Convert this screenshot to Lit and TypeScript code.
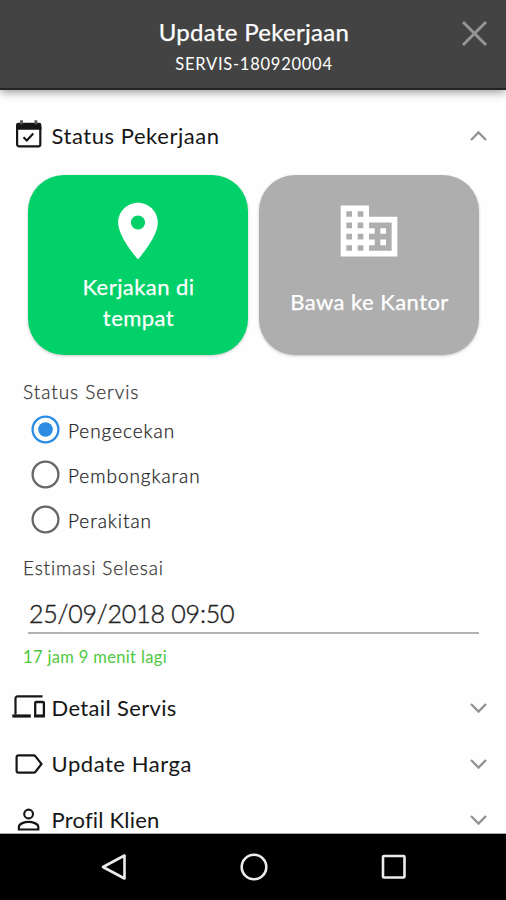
import { LitElement, html, css, svg } from "lit";
import { customElement, property, state } from "lit/decorators.js";
import { classMap } from "lit/directives/class-map.js";

const icons: Record<string, unknown> = {
  calendar: svg`<path d="M6.100 9v17.600a1.700 1.700 0 0 0 1.700 1.700h19.800a1.700 1.700 0 0 0 1.700-1.700V9" fill="none" stroke="#161616" stroke-width="2.200"/>
    <path d="M5 11.800V7a2.200 2.200 0 0 1 2.200-2.200h21A2.200 2.200 0 0 1 30.400 7v4.800z" fill="#161616"/>
    <path d="M10.500 2.200v4M24.900 2.200v4" stroke="#555" stroke-width="2.800" fill="none"/>
    <path d="M12.500 19.300l3.300 3.200 6.500-7" fill="none" stroke="#161616" stroke-width="2.100"/>`,
  devices: svg`<path d="M4.500 24.500V8.500a2.200 2.200 0 0 1 2.200-2.200H31.500" fill="none" stroke="#161616" stroke-width="2.200"/>
    <path d="M1.300 26H19.800" stroke="#161616" stroke-width="3.200" fill="none"/>
    <rect x="24.200" y="12" width="8.700" height="13.700" rx="1" fill="none" stroke="#161616" stroke-width="2.300"/>
    <path d="M23 26.200H34" stroke="#161616" stroke-width="2.600"/>`,
  label: svg`<path d="M7.500 9.300H22.500a2.500 2.500 0 0 1 2 1L30.500 18l-6 7.700a2.500 2.500 0 0 1-2 1H7.500A1.900 1.900 0 0 1 5.600 24.800V11.200A1.900 1.900 0 0 1 7.500 9.300z" fill="none" stroke="#161616" stroke-width="2.200"/>`,
  person: svg`<circle cx="17.600" cy="12" r="4.400" fill="none" stroke="#161616" stroke-width="2.100"/>
    <path d="M7.900 27.500v-2.600c0-3.400 6.200-5 9.700-5s9.700 1.600 9.700 5v2.600z" fill="none" stroke="#161616" stroke-width="2.200"/>`,
};

@customElement("section-row")
class SectionRow extends LitElement {
  @property() icon = "";
  @property() label = "";
  @property({ type: Boolean }) open = false;
  @property({ type: Number }) tracking = 0;
  static styles = css`
    :host { display: flex; align-items: center; height: 56px; padding: 0 18px 0 11px; flex: none; }
    .icon { width: 36px; height: 36px; flex: none; }
    .label { flex: 1; margin-left: 4.500px; font-size: 22px; line-height: 30px; color: #161616; white-space: nowrap; }
    .chev { width: 19px; height: 12px; flex: none; }
    .chev.up { transform: scaleY(-1); }
  `;
  render() {
    return html`<svg class="icon" viewBox="0 0 36 36">${icons[this.icon]}</svg>
      <span class="label" style="letter-spacing:${this.tracking}px">${this.label}</span>
      <svg class=${classMap({ chev: true, up: this.open })} viewBox="0 0 19 12"><path d="M2 2l7.500 7.500L17 2" fill="none" stroke="#929292" stroke-width="2.300"/></svg>`;
  }
}

@customElement("app-root")
class AppRoot extends LitElement {
  @state() selected = 0;
  static styles = css`
    :host { display: flex; flex-direction: column; height: 900px; overflow: hidden; background: #fefefe; font-family: Lato, "Open Sans", sans-serif; color: #161616; }
    header { position: relative; z-index: 1; height: 90px; box-sizing: border-box; padding-top: 17px; background: #434343; border-bottom: 2px solid #252222; box-shadow: 0 2px 9px rgba(0,0,0,.42); text-align: center; color: #fff; flex: none; }
    .title { font-size: 24px; line-height: 30px; letter-spacing: .3px; padding-left: 2px; -webkit-text-stroke: .25px #fff; }
    .sub { font-size: 16.500px; line-height: 20px; margin-top: 7px; padding-left: 2px; letter-spacing: .75px; }
    .close { position: absolute; right: 18px; top: 20px; width: 27px; height: 27px; }
    main { flex: 1; min-height: 0; overflow: hidden; display: flex; flex-direction: column; padding-top: 18px; border-bottom: 1px solid #aaa; }
    .tiles { display: flex; gap: 11px; padding: 0 27px 0 28px; margin-top: 11px; flex: none; }
    .tile { flex: 1; height: 180px; box-sizing: border-box; border-radius: 36px; display: flex; flex-direction: column; align-items: center; padding-top: 22px; background: #aeaeae; color: #fff; font-size: 22px; line-height: 31px; text-align: center; box-shadow: 0 1px 3px rgba(0,0,0,.22); -webkit-text-stroke: .25px #fff; letter-spacing: .45px; }
    .tile.on { background: #02d069; }
    .tile svg { width: 68px; height: 68px; flex: none; }
    .tile .t { width: 130px; margin-top: 6px; padding-left: 1px; }
    .tile .t.one { width: auto; white-space: nowrap; margin-top: 21px; }
    .cap { font-size: 19px; line-height: 24px; padding-left: 23px; color: #333; font-weight: 300; -webkit-text-stroke: .25px #333; flex: none; }
    .status { margin-top: 25px; letter-spacing: .95px; }
    .radios { display: flex; flex-direction: column; margin-top: 3px; padding-left: 31px; flex: none; }
    .radio { display: flex; align-items: center; height: 45px; gap: 8px; font-size: 19px; font-weight: 300; letter-spacing: .95px; color: #222; -webkit-text-stroke: .25px #222; }
    .radio span { padding-top: 2px; }
    .radio svg { width: 29px; height: 29px; }
    .eta { margin-top: 14px; letter-spacing: .85px; }
    .date { margin: 16px 27px 0 28px; padding: 0 0 2px 1px; border-bottom: 2px solid #b2b2b2; font-size: 25px; line-height: 34px; font-weight: 300; -webkit-text-stroke: .4px #222; letter-spacing: -.2px; color: #222; flex: none; }
    .left { margin-top: 12px; padding-left: 23px; font-size: 16.500px; line-height: 22px; letter-spacing: .35px; color: #4fc93f; flex: none; }
    .list { margin-top: 12px; flex: none; }
    nav { height: 66px; background: #000; display: flex; justify-content: space-around; align-items: center; padding: 0 42px 0 44px; flex: none; }
    nav svg { width: 30px; height: 30px; fill: none; stroke: #ececec; stroke-width: 2.600; }
  `;
  render() {
    return html`
      <header>
        <div class="title">Update Pekerjaan</div>
        <div class="sub">SERVIS-180920004</div>
        <svg class="close" viewBox="0 0 27 27"><path d="M2 2l23 23M25 2L2 25" stroke="#959595" stroke-width="3"/></svg>
      </header>
      <main>
        <section-row icon="calendar" label="Status Pekerjaan" tracking="0.55" open></section-row>
        <div class="tiles">
          <div class="tile on">
            <svg viewBox="0 0 24 24"><path fill="#fff" d="M12 2C8.130 2 5 5.130 5 9c0 5.250 7 13 7 13s7-7.750 7-13c0-3.870-3.130-7-7-7zm0 9.500a2.500 2.500 0 1 1 0-5 2.500 2.500 0 0 1 0 5z"/></svg>
            <div class="t">Kerjakan di tempat</div>
          </div>
          <div class="tile">
            <svg viewBox="0 0 24 24"><path fill="#fff" d="M12 7V3H2v18h20V7H12zM6 19H4v-2h2v2zm0-4H4v-2h2v2zm0-4H4V9h2v2zm0-4H4V5h2v2zm4 12H8v-2h2v2zm0-4H8v-2h2v2zm0-4H8V9h2v2zm0-4H8V5h2v2zm10 12h-8v-2h2v-2h-2v-2h2v-2h-2V9h8v10zm-2-8h-2v2h2v-2zm0 4h-2v2h2v-2z"/></svg>
            <div class="t one">Bawa ke Kantor</div>
          </div>
        </div>
        <div class="cap status">Status Servis</div>
        <div class="radios">
          ${["Pengecekan", "Pembongkaran", "Perakitan"].map((t, i) => html`
            <div class="radio" @click=${() => (this.selected = i)}>
              <svg viewBox="0 0 29 29">
                <circle cx="14.500" cy="14.500" r="12.900" fill="none" stroke=${i === this.selected ? "#2b8ce2" : "#666"} stroke-width="2.300"/>
                ${i === this.selected ? svg`<circle cx="14.500" cy="14.500" r="7.300" fill="#2b8ce2"/>` : ""}
              </svg><span>${t}</span>
            </div>`)}
        </div>
        <div class="cap eta">Estimasi Selesai</div>
        <div class="date">25/09/2018 09:50</div>
        <div class="left">17 jam 9 menit lagi</div>
        <div class="list">
          <section-row icon="devices" label="Detail Servis" tracking="0.35"></section-row>
          <section-row icon="label" label="Update Harga" tracking="0.55"></section-row>
          <section-row icon="person" label="Profil Klien" tracking="0.2"></section-row>
        </div>
      </main>
      <nav>
        <svg viewBox="0 0 30 30"><path d="M25.500 3.500v23L4 15z" stroke-linejoin="round"/></svg>
        <svg viewBox="0 0 30 30"><circle cx="15" cy="15" r="12.300"/></svg>
        <svg viewBox="0 0 30 30"><rect x="4" y="4" width="21.500" height="21.500" rx="1"/></svg>
      </nav>`;
  }
}
